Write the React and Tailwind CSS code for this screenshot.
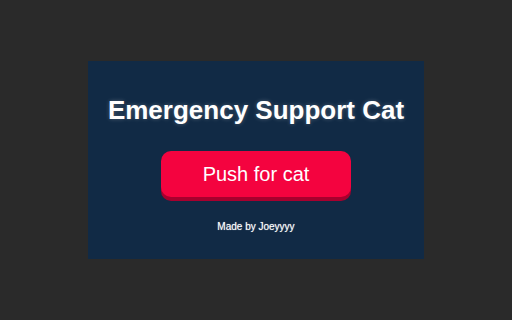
import React from 'react';

export default function App() {
  return (
    <div className="w-[512px] h-[320px] bg-[#2a2a2a] flex items-center justify-center font-['Liberation_Sans',Arial,sans-serif]">
      <div className="w-[336px] h-[198px] bg-[#112a45] flex flex-col items-center pt-[34px]">
        <h1 className="text-[26px] leading-[30px] font-bold text-white [text-shadow:0_0_4px_rgba(255,255,255,0.25)]">
          Emergency Support Cat
        </h1>
        <button className="mt-[26px] w-[190px] h-[46px] rounded-[10px] bg-[#f4033f] text-white text-[20px] shadow-[0_4px_0_#a8002e]">
          Push for cat
        </button>
        <p className="mt-[24px] text-[10px] leading-[12px] text-white [text-shadow:0_0_1px_rgba(255,255,255,0.6)]">
          Made by Joeyyyy
        </p>
      </div>
    </div>
  );
}
